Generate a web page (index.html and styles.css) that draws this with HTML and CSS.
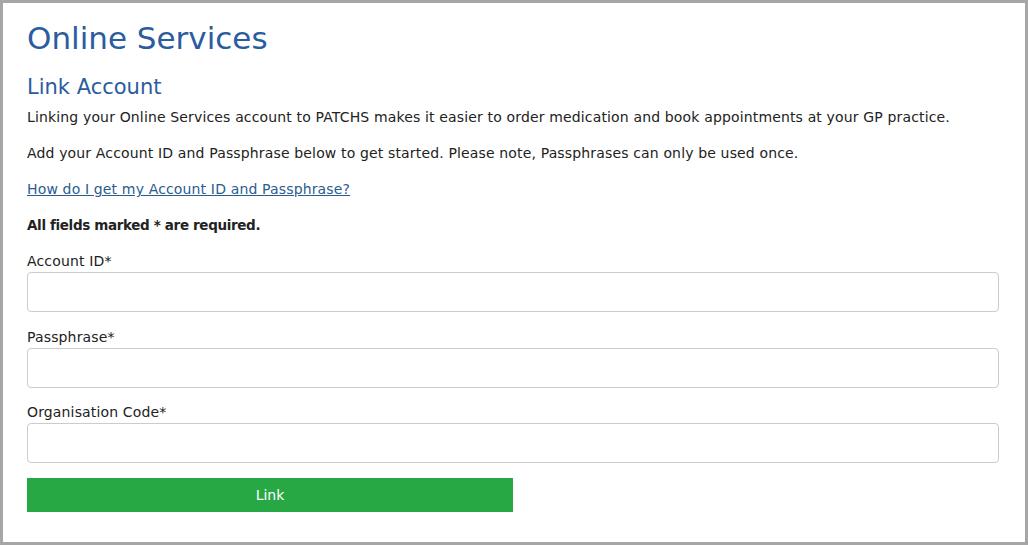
FILE: index.html
```html
<!DOCTYPE html>
<html lang="en">
<head>
<meta charset="utf-8">
<title>Online Services</title>
<link rel="stylesheet" href="styles.css">
</head>
<body>
<div class="frame">
  <h1 class="title">Online Services</h1>
  <h2 class="subtitle">Link Account</h2>
  <p class="text">Linking your Online Services account to PATCHS makes it easier to order medication and book appointments at your GP practice.</p>
  <p class="text">Add your Account ID and Passphrase below to get started. Please note, Passphrases can only be used once.</p>
  <p class="text"><a class="link" href="#">How do I get my Account ID and Passphrase?</a></p>
  <p class="text bold">All fields marked * are required.</p>
  <form class="form">
    <div class="field">
      <label class="label">Account ID*</label>
      <input class="input" type="text">
    </div>
    <div class="field">
      <label class="label">Passphrase*</label>
      <input class="input" type="text">
    </div>
    <div class="field">
      <label class="label">Organisation Code*</label>
      <input class="input" type="text">
    </div>
    <button class="btn" type="button">Link</button>
  </form>
</div>
</body>
</html>
```

FILE: styles.css
```css
html, body {
  margin: 0;
  padding: 0;
  background: #fff;
}
.frame {
  box-sizing: border-box;
  width: 1028px;
  height: 545px;
  border: 3px solid #a6a6a6;
  padding: 16px 26px 0 24px;
  font-family: "DejaVu Sans", sans-serif;
  color: #222;
}
.title {
  margin: 0;
  font-size: 31px;
  font-weight: 400;
  line-height: 38px;
  color: #2b5c9e;
}
.subtitle {
  margin: 17px 0 0;
  font-size: 21px;
  font-weight: 400;
  line-height: 26px;
  color: #2b5c9e;
}
.text {
  margin: 7px 0 0;
  font-size: 14px;
  line-height: 20px;
  letter-spacing: 0.15px;
}
.text + .text {
  margin-top: 16px;
}
.link {
  color: #2b5c8f;
}
.bold {
  font-weight: 700;
  font-size: 13.5px;
  letter-spacing: -0.35px;
}
.form {
  margin-top: 16px;
  display: flex;
  flex-direction: column;
}
.field {
  display: flex;
  flex-direction: column;
  gap: 1px;
}
.label {
  font-size: 14px;
  line-height: 20px;
  letter-spacing: 0.15px;
}
.input {
  box-sizing: border-box;
  height: 40px;
  width: 100%;
  border: 1px solid #cccccc;
  border-radius: 4px;
  margin: 0 0 14.5px;
  font: inherit;
}
.btn {
  margin-top: 0.5px;
  width: 486px;
  height: 34px;
  border: 0;
  background: #28a745;
  color: #fff;
  font-family: "DejaVu Sans", sans-serif;
  font-size: 14px;
}
```
